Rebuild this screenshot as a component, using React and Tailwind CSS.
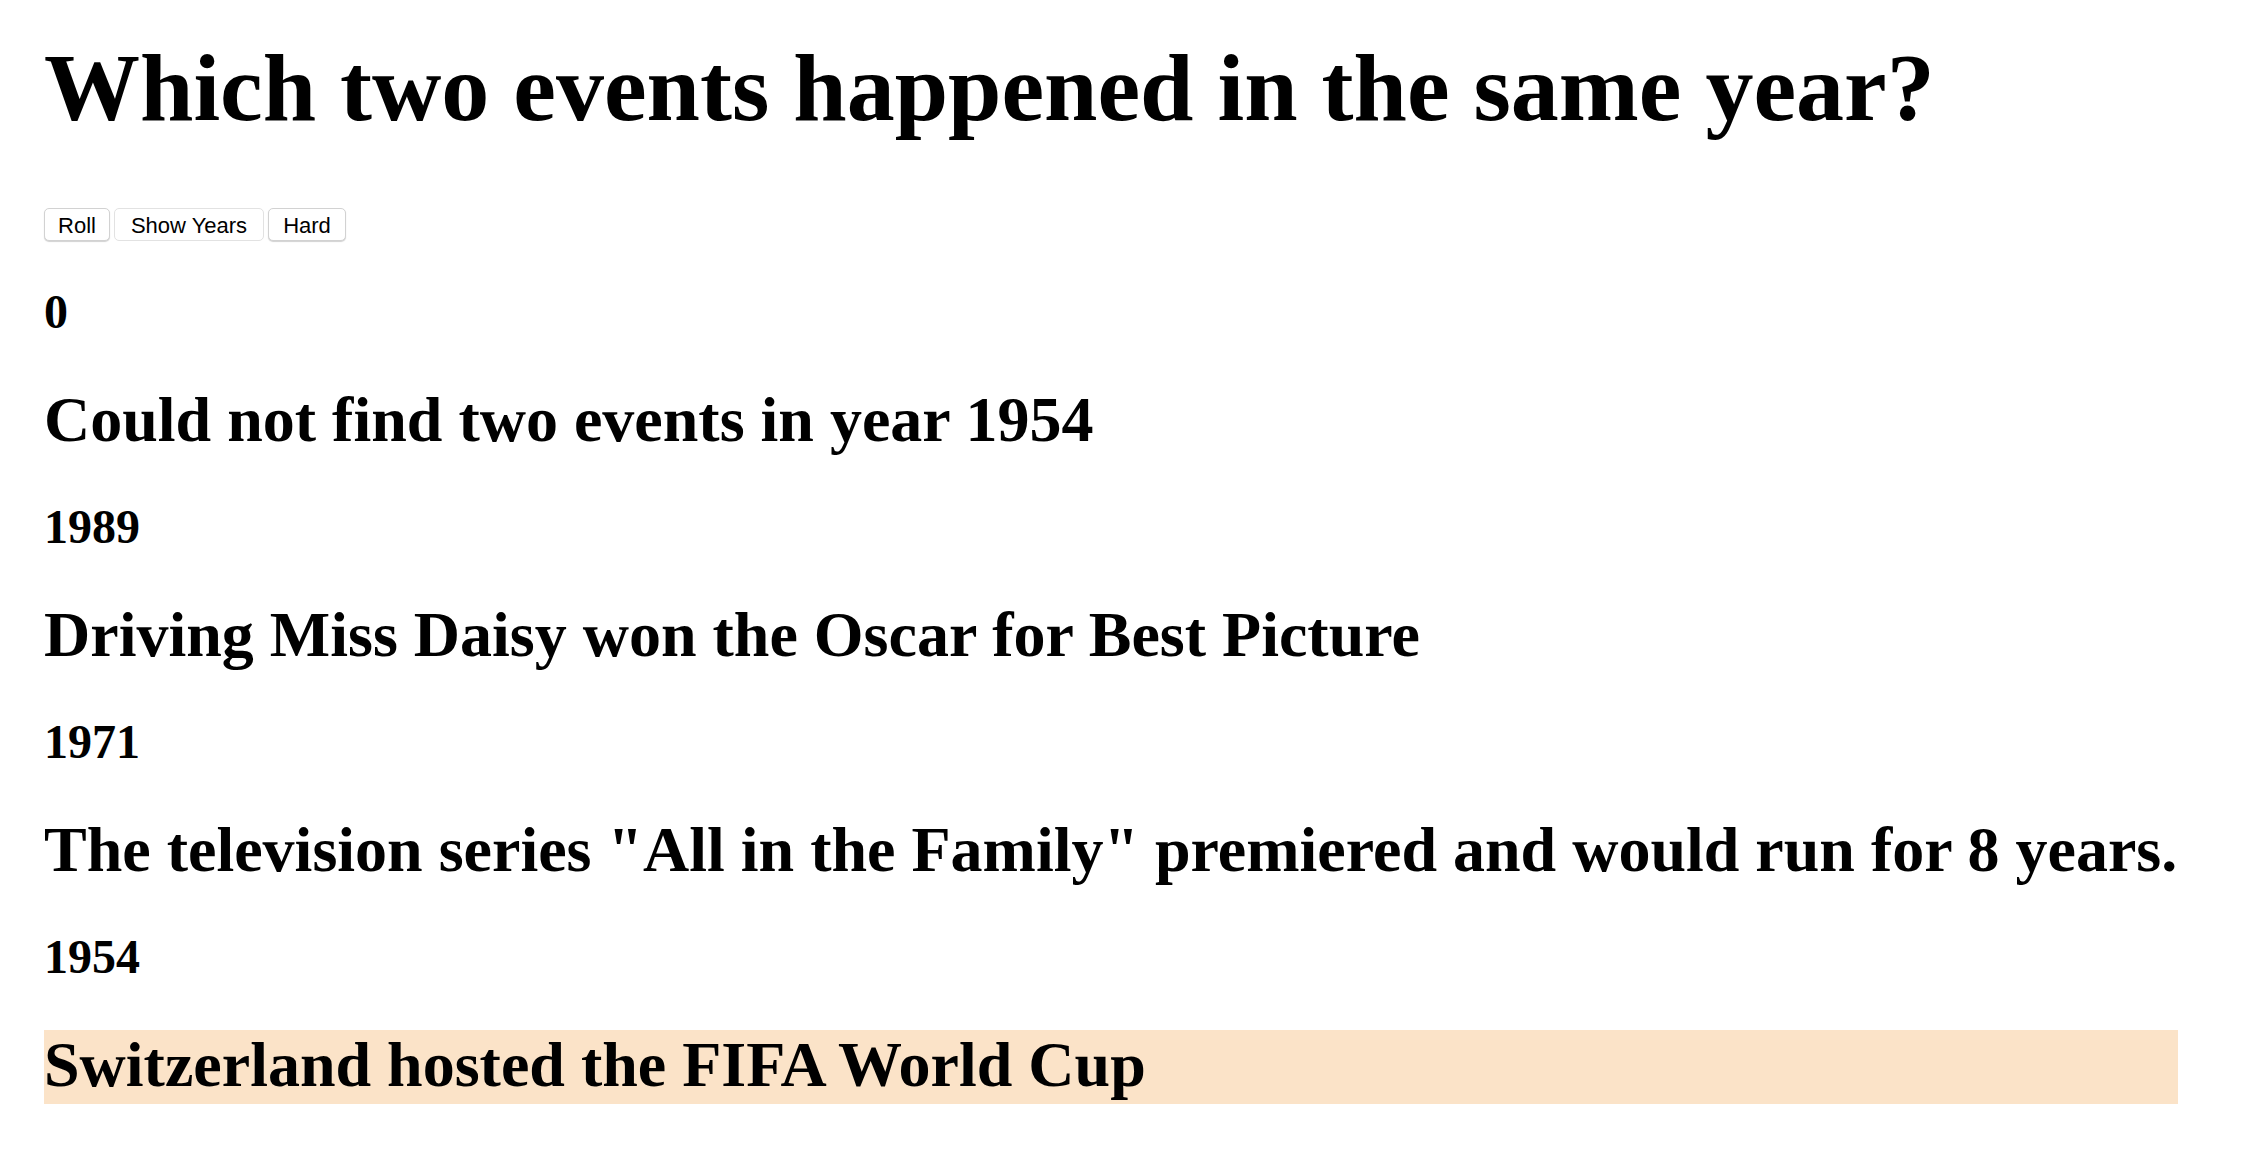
import { useState } from 'react';

const rounds = [
  { year: '0', event: 'Could not find two events in year 1954' },
  { year: '1989', event: 'Driving Miss Daisy won the Oscar for Best Picture' },
  { year: '1971', event: 'The television series "All in the Family" premiered and would run for 8 years.' },
  { year: '1954', event: 'Switzerland hosted the FIFA World Cup', picked: true },
];

export default function App() {
  const [showYears, setShowYears] = useState(true);

  return (
    <div className="min-h-screen bg-white text-black pl-[44px] pr-[64px] pb-10 font-['Liberation_Serif',serif]">
      <h1 className="pt-[40px] text-[96px] leading-[96px] font-bold whitespace-nowrap">
        Which two events happened in the same year?
      </h1>

      <div className="mt-[72px] -ml-[2px] flex font-['Liberation_Sans',Arial,sans-serif] text-[22px]">
        <button className="mx-[2px] h-[33px] w-[66px] flex items-center justify-center pt-[2px] rounded-[5px] border border-[#d2d2d2] bg-white shadow-[0_1px_1px_rgba(0,0,0,0.18)]">
          Roll
        </button>
        <button
          onClick={() => setShowYears(!showYears)}
          className="mx-[2px] h-[33px] w-[150px] flex items-center justify-center pt-[2px] rounded-[5px] border border-[#e2e2e2] bg-white"
        >
          Show Years
        </button>
        <button className="mx-[2px] h-[33px] w-[78px] flex items-center justify-center pt-[2px] rounded-[5px] border border-[#d2d2d2] bg-white shadow-[0_1px_1px_rgba(0,0,0,0.18)]">
          Hard
        </button>
      </div>

      <div className="flex flex-col">
        {rounds.map((r, i) => (
          <div key={i} className="flex flex-col">
            <h3 className={`${i === 0 ? 'mt-[47px]' : 'mt-[44px]'} text-[48px] leading-[48px] font-bold`}>
              {showYears ? r.year : ''}
            </h3>
            <h2
              className={`mt-[49px] h-[74px] pb-[5px] text-[64px] leading-[69px] font-bold whitespace-nowrap ${
                r.picked ? 'bg-[#fbe3c8]' : ''
              }`}
            >
              {r.event}
            </h2>
          </div>
        ))}
      </div>
    </div>
  );
}
